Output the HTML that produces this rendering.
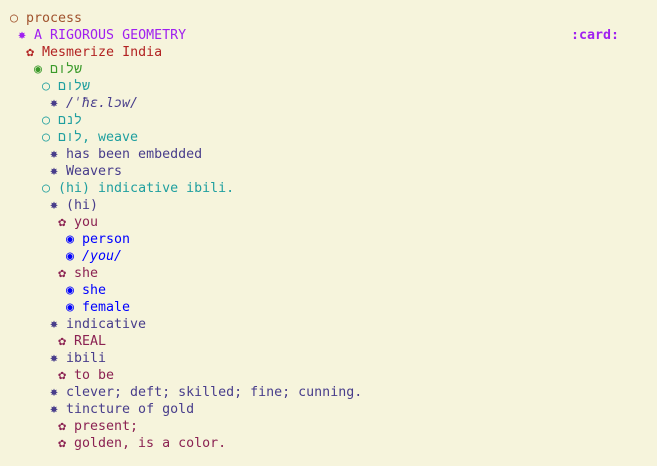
<!DOCTYPE html>
<html><head><meta charset="utf-8"><style>
html,body{margin:0;padding:0;background:#f6f4dc;width:657px;height:466px;overflow:hidden}
body{font-family:"DejaVu Sans Mono","Liberation Mono",monospace;font-size:13.3px;line-height:17px;padding-top:10px;box-sizing:border-box}
div{white-space:pre;position:relative;height:17px}
.l0{padding-left:10px;color:#a0522d}
.l1{padding-left:18px;color:#a020f0}
.l2{padding-left:26px;color:#b22222}
.l3{padding-left:34px;color:#3a9a2a}
.l4{padding-left:42px;color:#1f9f9f}
.l5{padding-left:50px;color:#483d8b}
.l6{padding-left:58px;color:#8b2252}
.l7{padding-left:66px;color:#0000ff}
.card{position:absolute;left:571px;top:0;font-weight:bold;color:#a020f0}
</style></head><body>
<div class="l0">○ process</div>
<div class="l1">✸ A RIGOROUS GEOMETRY<span class="card">:card:</span></div>
<div class="l2">✿ Mesmerize India</div>
<div class="l3">◉ <span dir="rtl">שלום</span></div>
<div class="l4">○ <span dir="rtl">שלום</span></div>
<div class="l5">✸ <i>/ˈħɛ.lɔw/</i></div>
<div class="l4">○ <span dir="rtl">לנם</span></div>
<div class="l4">○ לום, weave</div>
<div class="l5">✸ has been embedded</div>
<div class="l5">✸ Weavers</div>
<div class="l4">○ (hi) indicative ibili.</div>
<div class="l5">✸ (hi)</div>
<div class="l6">✿ you</div>
<div class="l7">◉ person</div>
<div class="l7">◉ <i>/you/</i></div>
<div class="l6">✿ she</div>
<div class="l7">◉ she</div>
<div class="l7">◉ female</div>
<div class="l5">✸ indicative</div>
<div class="l6">✿ REAL</div>
<div class="l5">✸ ibili</div>
<div class="l6">✿ to be</div>
<div class="l5">✸ clever; deft; skilled; fine; cunning.</div>
<div class="l5">✸ tincture of gold</div>
<div class="l6">✿ present;</div>
<div class="l6">✿ golden, is a color.</div>
</body></html>
